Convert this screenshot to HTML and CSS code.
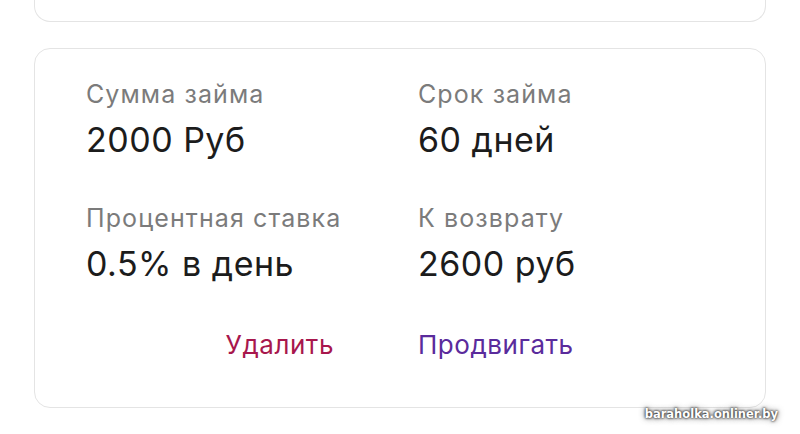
FILE: index.html
```html
<!DOCTYPE html>
<html lang="ru">
<head>
<meta charset="utf-8">
<link rel="stylesheet" href="styles.css">
</head>
<body>
<div class="page">
  <div class="card card-prev"></div>
  <div class="card card-loan">
    <div class="grid">
      <div class="cell">
        <div class="label">Сумма займа</div>
        <div class="value">2000 Руб</div>
      </div>
      <div class="cell">
        <div class="label">Срок займа</div>
        <div class="value">60 дней</div>
      </div>
      <div class="cell">
        <div class="label">Процентная ставка</div>
        <div class="value">0.5% в день</div>
      </div>
      <div class="cell">
        <div class="label">К возврату</div>
        <div class="value">2600 руб</div>
      </div>
      <div class="cell cell-action cell-delete">
        <span class="action action-delete">Удалить</span>
      </div>
      <div class="cell cell-action">
        <span class="action action-promote">Продвигать</span>
      </div>
    </div>
  </div>
  <div class="watermark">baraholka.onliner.by</div>
</div>
</body>
</html>
```
FILE: styles.css
```css
* { box-sizing: border-box; }
html, body {
  margin: 0;
  padding: 0;
  background: #ffffff;
}
body {
  font-family: Inter, "Noto Sans", sans-serif;
  width: 800px;
  height: 434px;
  overflow: hidden;
}
.page {
  position: relative;
  height: 434px;
  padding: 0 34px;
  display: flex;
  flex-direction: column;
  gap: 26px;
}
.card {
  border: 1px solid #e4e4e4;
  background: #ffffff;
}
.card-prev {
  height: 22px;
  border-top: none;
  border-radius: 0 0 16px 16px;
}
.card-loan {
  height: 360px;
  border-radius: 16px;
  padding: 30px 0 0 51px;
}
.grid {
  display: grid;
  grid-template-columns: 332px 1fr;
  row-gap: 43px;
}
.label {
  font-size: 25px;
  line-height: 30px;
  letter-spacing: 1.1px;
  color: #7b7b7b;
  margin-bottom: 11px;
}
.value {
  font-size: 34px;
  line-height: 40px;
  letter-spacing: 0.5px;
  color: #1c1c1c;
}
.cell-action {
  padding-top: 3px;
}
.cell-delete {
  display: flex;
  justify-content: flex-end;
  padding-right: 84px;
}
.action {
  font-size: 26px;
  line-height: 30px;
  letter-spacing: 0.55px;
}
.action-delete { color: #a8174d; }
.action-promote { color: #5a2b9c; }
.watermark {
  position: absolute;
  right: 22px;
  bottom: 13px;
  font-family: "DejaVu Sans", sans-serif;
  font-weight: bold;
  font-size: 11.5px;
  color: #ffffff;
  text-shadow: 0 0 2px #333, 0 0 3px #444, 0 0 6px rgba(0,0,0,0.7);
}
```
